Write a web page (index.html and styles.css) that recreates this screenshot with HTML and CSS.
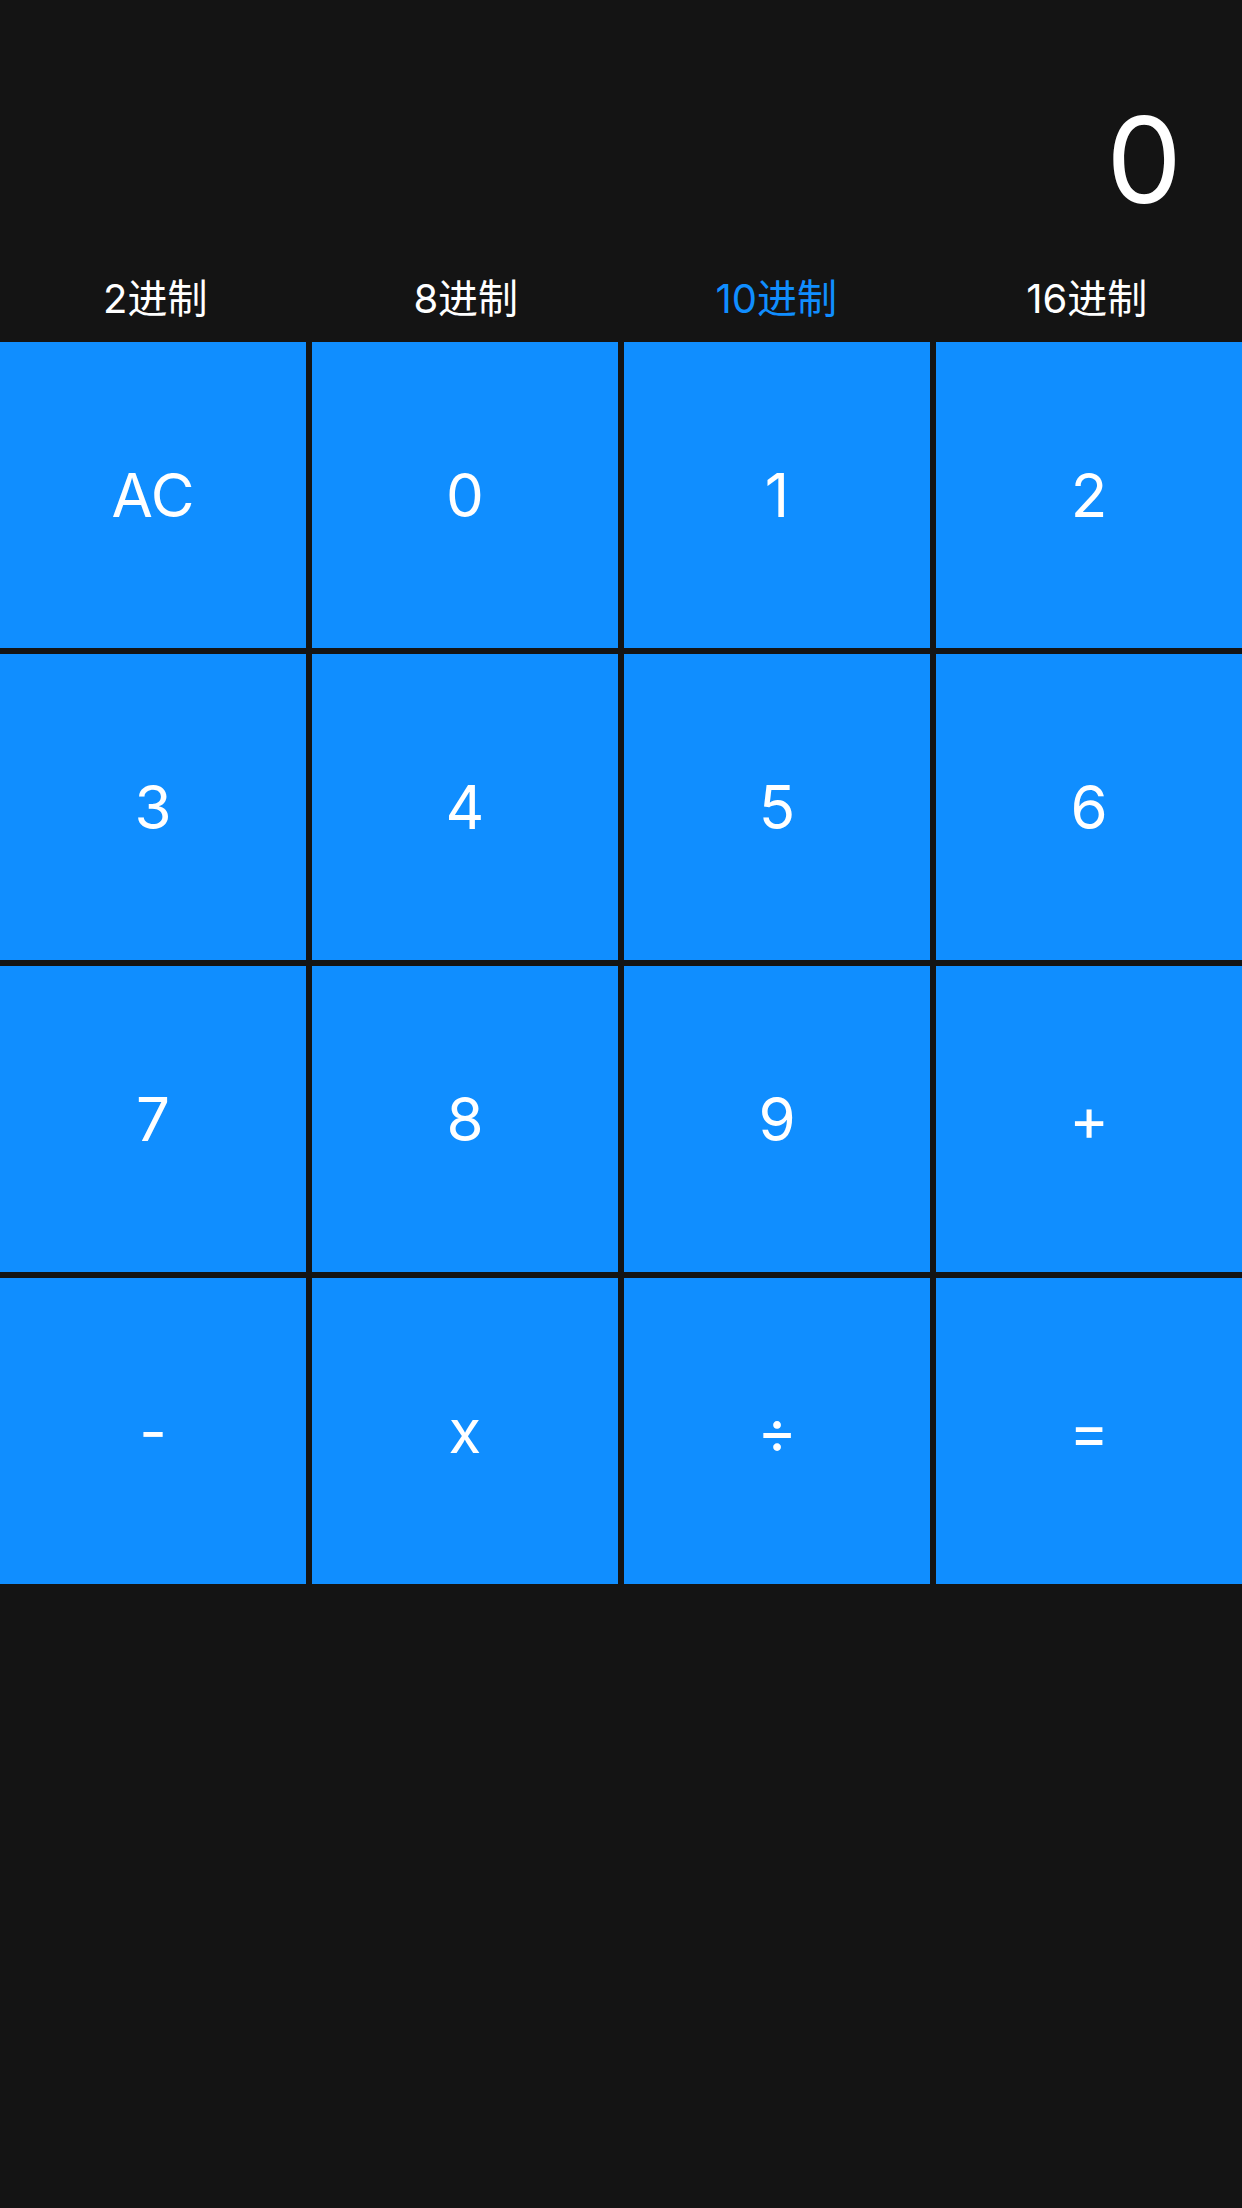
FILE: index.html
```html
<!DOCTYPE html>
<html lang="zh">
<head>
<meta charset="utf-8">
<title>Calculator</title>
<link rel="stylesheet" href="styles.css">
</head>
<body>
<div class="app">
  <div class="display">0</div>
  <div class="tabs">
    <div class="tab">2进制</div>
    <div class="tab">8进制</div>
    <div class="tab active">10进制</div>
    <div class="tab">16进制</div>
  </div>
  <div class="keys">
    <div class="key">AC</div>
    <div class="key">0</div>
    <div class="key">1</div>
    <div class="key">2</div>
    <div class="key">3</div>
    <div class="key">4</div>
    <div class="key">5</div>
    <div class="key">6</div>
    <div class="key">7</div>
    <div class="key">8</div>
    <div class="key">9</div>
    <div class="key">+</div>
    <div class="key">-</div>
    <div class="key">x</div>
    <div class="key">÷</div>
    <div class="key">=</div>
  </div>
</div>
</body>
</html>
```

FILE: styles.css
```css
html, body {
  margin: 0;
  padding: 0;
  background: #141414;
}
body {
  width: 1242px;
  height: 2208px;
  font-family: Inter, "Noto Sans CJK SC", sans-serif;
  color: #ffffff;
}
.app {
  display: flex;
  flex-direction: column;
}
.display {
  height: 250px;
  box-sizing: border-box;
  padding: 90px 60px 20px 0;
  text-align: right;
  font-size: 120px;
  line-height: 140px;
  font-weight: 400;
}
.tabs {
  display: flex;
  height: 92px;
}
.tab {
  flex: 1;
  display: flex;
  align-items: center;
  justify-content: center;
  font-size: 40px;
  font-family: Inter, "Noto Sans CJK SC", sans-serif;
}
.tab.active {
  color: #108eff;
}
.keys {
  display: grid;
  grid-template-columns: repeat(4, 306px);
  grid-auto-rows: 306px;
  gap: 6px;
}
.key {
  background: #108eff;
  display: flex;
  align-items: center;
  justify-content: center;
  font-size: 60px;
  line-height: 1;
}
```
